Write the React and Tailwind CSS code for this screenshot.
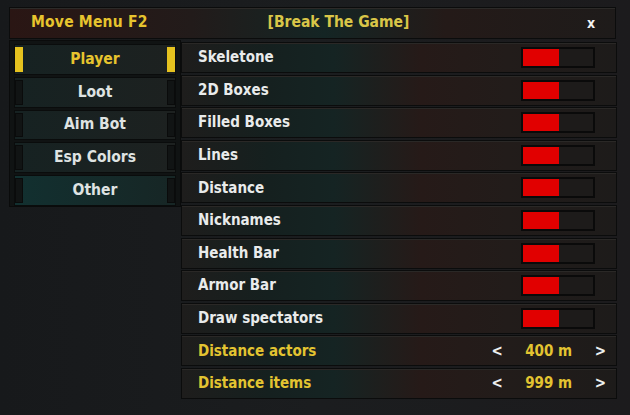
import { useState } from 'react';

const TABS = ['Player', 'Loot', 'Aim Bot', 'Esp Colors', 'Other'];

const TOGGLES = [
  'Skeletone',
  '2D Boxes',
  'Filled Boxes',
  'Lines',
  'Distance',
  'Nicknames',
  'Health Bar',
  'Armor Bar',
  'Draw spectators',
];

const STEPPERS = [
  { label: 'Distance actors', value: '400 m' },
  { label: 'Distance items', value: '999 m' },
];

const FONT = "font-['DejaVu_Sans_Condensed','DejaVu_Sans',sans-serif]";

export default function App() {
  const [tab, setTab] = useState('Player');

  return (
    <div className={`w-[630px] h-[415px] overflow-hidden bg-[linear-gradient(90deg,#17191b_0%,#1b1d1f_50%,#1c1b1d_100%)] pt-[7px] pl-[9px] ${FONT}`}>
      <header className="w-[607px] h-[32px] border border-[#0b0c0c] shadow-[inset_0_1px_0_#2c2a28] bg-[linear-gradient(90deg,#2a1614_0%,#221b1a_30%,#142524_52%,#241a18_72%,#1e1b1a_100%)] flex items-center pl-[21px] pr-[20px]">
        <span className="text-[15.5px] font-bold text-[#e7c42e] tracking-[0.2px]">Move Menu F2</span>
        <span className="ml-[120px] text-[15.5px] font-bold text-[#d9c648]">[Break The Game]</span>
        <span className="ml-auto text-[14px] font-bold text-[#f2f2f2]">x</span>
      </header>

      <div className="flex mt-[1px]">
        <nav className="w-[172px] h-[167px] bg-[#101313] border border-[#0a0b0b] pt-[3px] pl-[4px] pr-[4px] flex flex-col gap-[2px]">
          {TABS.map((t) => {
            const active = tab === t;
            return (
              <button
                key={t}
                onClick={() => setTab(t)}
                className={`h-[31px] flex items-stretch border border-[#0a0c0c] ${
                  t === 'Other'
                    ? 'bg-[linear-gradient(90deg,#123030,#172625)]'
                    : 'bg-[linear-gradient(90deg,#162222,#1d2120)]'
                }`}
              >
                <span className={`w-[8px] my-[2px] ${active ? 'bg-[#e5c21f]' : 'bg-[#111414] border border-[#0a0b0b]'}`} />
                <span className={`flex-1 flex items-center justify-center text-[15.5px] font-bold ${active ? 'text-[#e7c42e]' : 'text-[#dfe3e2]'}`}>
                  {t}
                </span>
                <span className={`w-[8px] my-[2px] ${active ? 'bg-[#e5c21f]' : 'bg-[#111414] border border-[#0a0b0b]'}`} />
              </button>
            );
          })}
        </nav>

        <main className="w-[436px] flex flex-col gap-[1.6px] pt-[2px]">
          {TOGGLES.map((label) => (
            <Row key={label}>
              <span className="text-[15px] font-bold text-[#e9ebeb]">{label}</span>
              <div className="ml-auto mr-[21px] w-[74px] h-[21px] border-2 border-[#0a0a0a] bg-[#1d1b1a] flex">
                <div className="w-[36px] h-full bg-[#e10000]" />
              </div>
            </Row>
          ))}
          {STEPPERS.map((s) => (
            <Row key={s.label}>
              <span className="text-[15px] font-bold text-[#e3c431]">{s.label}</span>
              <div className="ml-auto mr-[10px] flex items-center text-[15px] font-bold">
                <span className="text-[#eef0f0]">&lt;</span>
                <span className="w-[92px] text-center text-[#e3c431]">{s.value}</span>
                <span className="text-[#eef0f0]">&gt;</span>
              </div>
            </Row>
          ))}
        </main>
      </div>
    </div>
  );
}

function Row({ children }) {
  return (
    <div className="h-[31px] flex items-center pl-[16px] border border-[#0b0c0c] shadow-[inset_0_1px_0_#2a2826] bg-[linear-gradient(90deg,#1e1d1c_0%,#15201f_20%,#152423_35%,#261a18_55%,#221c1a_75%,#1d1b1a_100%)]">
      {children}
    </div>
  );
}
